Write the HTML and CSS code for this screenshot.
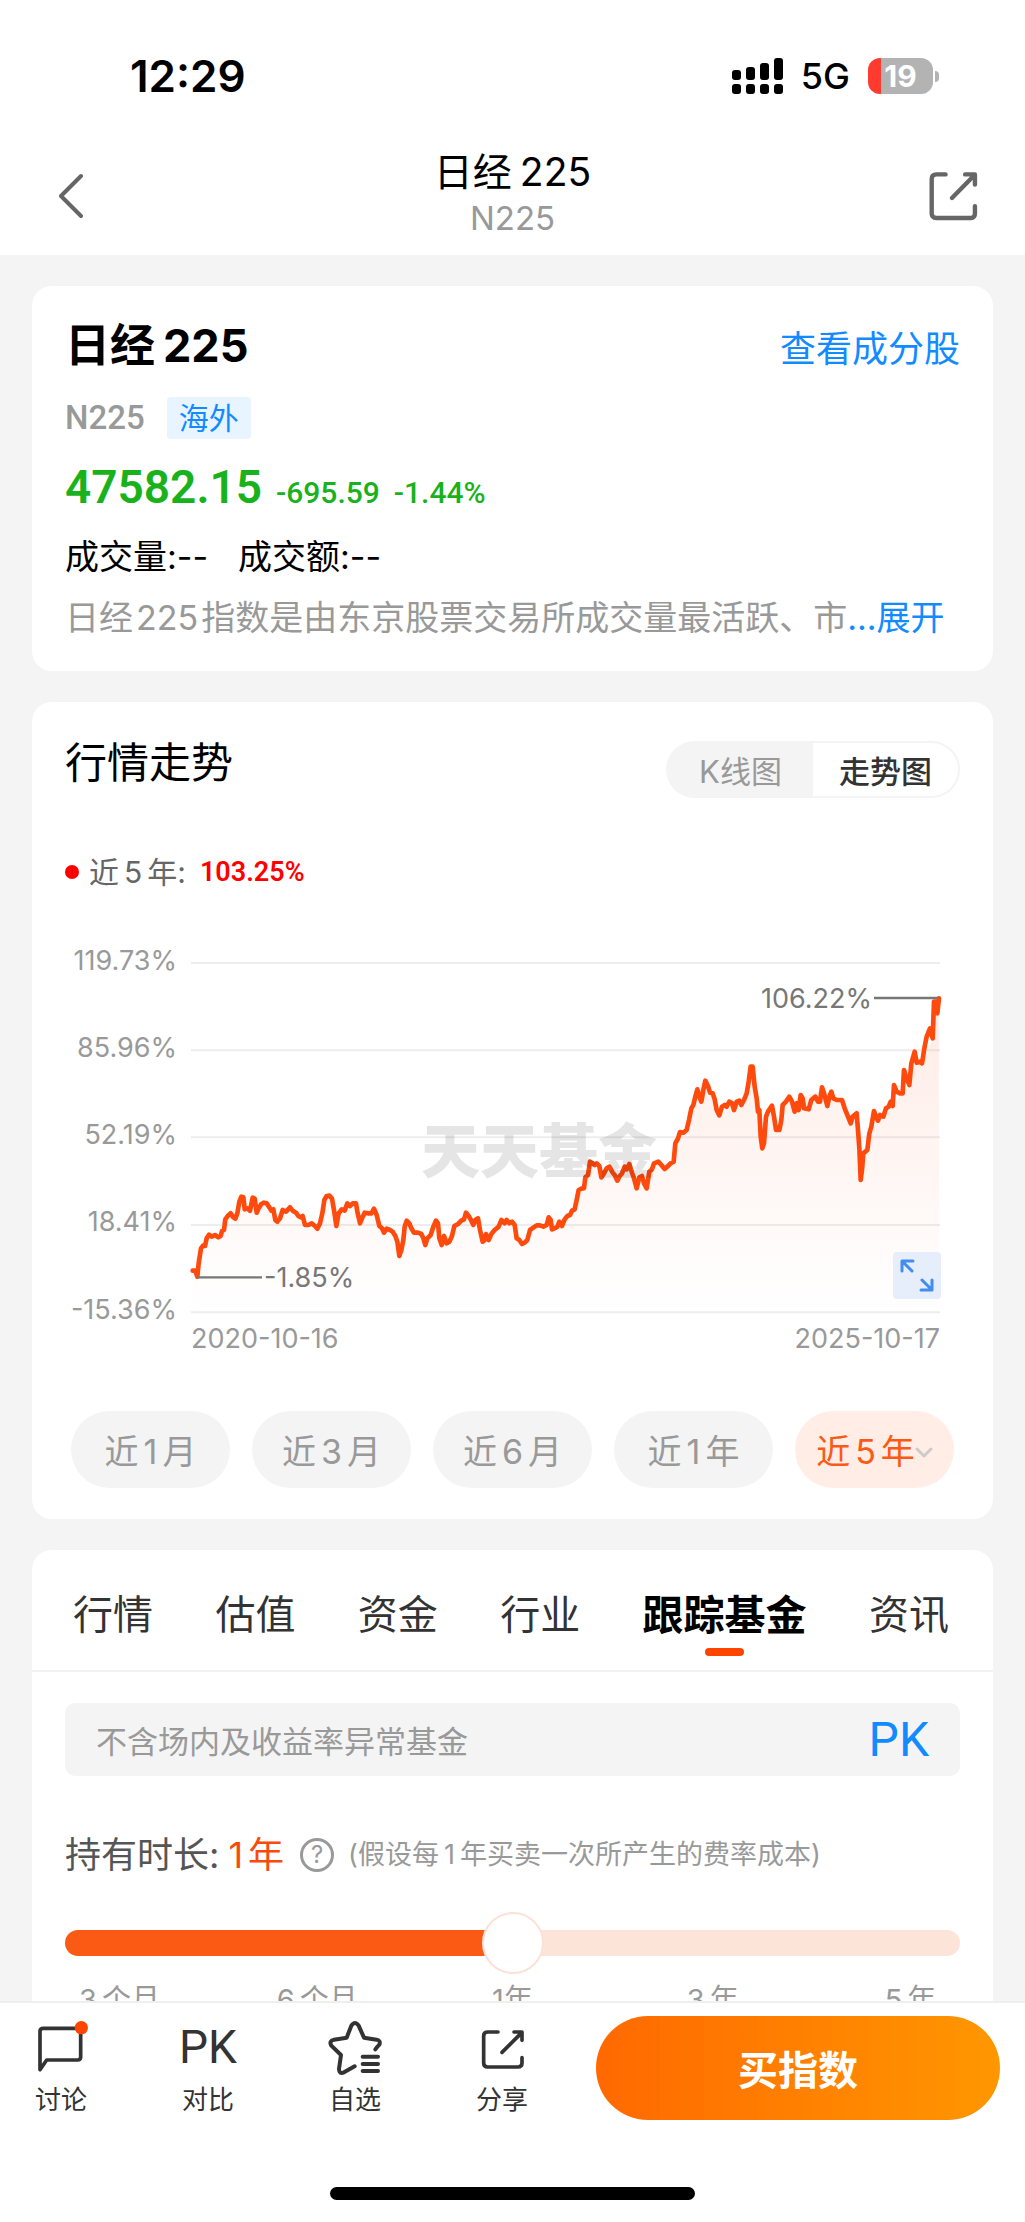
FILE: index.html
```html
<!DOCTYPE html>
<html lang="zh-CN">
<head>
<meta charset="utf-8">
<meta name="viewport" content="width=device-width, initial-scale=1">
<title>日经225</title>
<link rel="stylesheet" href="styles.css">
</head>
<body>
<div class="app">
  <header class="top">
    <div class="status">
      <span class="clock">12:29</span>
      <div class="status-icons">
        <svg class="signal" viewBox="0 0 51 36" aria-hidden="true">
          <rect x="0" y="12" width="9" height="10" rx="3"/><rect x="14" y="9" width="9" height="13" rx="3"/><rect x="28" y="5" width="9" height="17" rx="3"/><rect x="42" y="0" width="9" height="22" rx="3"/>
          <rect x="0" y="26" width="9" height="10" rx="3"/><rect x="14" y="26" width="9" height="10" rx="3"/><rect x="28" y="26" width="9" height="10" rx="3"/><rect x="42" y="26" width="9" height="10" rx="3"/>
        </svg>
        <span class="network">5G</span>
        <span class="battery"><span class="battery-level">19</span></span>
      </div>
    </div>
    <nav class="nav">
      <button class="icon-btn" aria-label="返回">
        <svg class="back-icon" viewBox="0 0 24 46" fill="none" stroke="#666" stroke-width="4" stroke-linecap="round" stroke-linejoin="round"><path d="M22 3 2 23 22 43"/></svg>
      </button>
      <div class="nav-title">
        <h1 class="nav-name">日经<span class="num">225</span></h1>
        <p class="nav-code">N225</p>
      </div>
      <button class="icon-btn" aria-label="分享">
        <svg class="share-icon" viewBox="30 38 148 148" fill="none" stroke="#666" stroke-width="13" stroke-linecap="round" stroke-linejoin="round"><path d="M79 48H52Q38 48 38 62V164Q38 177 52 177H154Q166 177 166 164V142M98 118 162 53M137 48H166V78"/></svg>
      </button>
    </nav>
  </header>

  <main class="content">
    <section class="card summary">
      <div class="summary-head">
        <h2 class="index-name">日经<span class="num">225</span></h2>
        <a class="link" href="#">查看成分股</a>
      </div>
      <div class="code-row"><span class="code">N225</span><span class="tag">海外</span></div>
      <div class="quote"><strong class="price">47582.15</strong><span class="change">-695.59</span><span class="change">-1.44%</span></div>
      <div class="volume"><span>成交量:--</span><span>成交额:--</span></div>
      <p class="intro">日经<span class="num">225</span>指数是由东京股票交易所成交量最活跃、市<a class="more" href="#">...展开</a></p>
    </section>

    <section class="card trend">
      <div class="trend-head">
        <h2 class="section-title">行情走势</h2>
        <div class="segment">
          <button class="segment-item">K线图</button>
          <button class="segment-item is-active">走势图</button>
        </div>
      </div>
      <div class="legend"><i class="dot"></i><span>近<span class="num">5</span>年:</span><strong class="legend-value">103.25%</strong></div>
      <svg class="chart" viewBox="0 0 895 450" role="img" aria-label="近5年走势">
        <defs>
          <linearGradient id="fade" x1="0" y1="0" x2="0" y2="1"><stop offset="0" stop-color="#f94e16" stop-opacity=".11"/><stop offset="1" stop-color="#f94e16" stop-opacity="0"/></linearGradient>
          <path id="curve" d="M458 1022 466 1022 472 1040 476 1000 483 955 489 947 495 948 500 925 507 914 515 920 525 915 535 922 542 918 546 903 552 900 556 868 563 858 572 850 580 862 586 866 592 850 598 815 604 800 610 802 614 838 622 835 630 842 638 803 644 806 650 848 656 835 664 822 672 818 680 820 688 832 694 842 700 838 706 870 712 875 720 865 728 840 738 845 750 832 758 842 768 848 775 858 782 862 788 858 795 885 805 885 815 880 825 888 832 896 840 880 847 850 853 810 860 798 868 797 876 806 882 840 889 888 896 850 905 838 914 842 922 820 930 828 938 820 948 820 953 850 960 880 966 865 974 848 984 850 994 850 1002 836 1010 855 1018 888 1026 895 1032 908 1040 896 1050 900 1058 905 1066 918 1072 935 1078 978 1084 960 1090 930 1094 890 1100 872 1108 880 1114 895 1122 908 1134 908 1144 912 1150 925 1156 945 1162 925 1172 915 1180 890 1188 872 1194 880 1198 925 1205 945 1212 918 1220 940 1228 935 1236 918 1243 888 1254 882 1264 872 1272 868 1278 848 1286 858 1294 872 1300 885 1306 870 1314 865 1320 900 1328 935 1334 930 1338 912 1346 930 1354 912 1364 900 1376 890 1384 870 1394 880 1400 870 1408 880 1416 875 1424 885 1430 925 1438 930 1446 942 1454 938 1462 930 1470 900 1480 893 1490 886 1500 886 1510 890 1520 885 1526 862 1532 870 1536 898 1544 895 1552 890 1558 875 1566 888 1574 868 1582 858 1590 855 1596 842 1604 838 1610 810 1616 780 1626 775 1632 775 1636 742 1644 735 1650 695 1658 700 1664 705 1670 700 1678 708 1684 742 1692 730 1700 715 1708 710 1718 728 1724 735 1732 752 1738 740 1746 730 1754 710 1760 718 1768 702 1776 728 1782 745 1790 775 1798 742 1806 738 1812 760 1820 775 1828 725 1836 718 1842 700 1855 695 1864 705 1874 717 1884 708 1892 700 1901 695 1906 640 1914 625 1920 606 1930 608 1940 600 1947 570 1954 535 1960 525 1966 500 1972 478 1978 500 1984 515 1990 480 1996 452 2004 468 2010 488 2018 490 2024 508 2030 540 2038 556 2046 530 2054 525 2060 530 2068 515 2076 520 2082 540 2090 515 2098 512 2104 525 2112 510 2120 490 2126 455 2132 410 2138 410 2144 470 2150 505 2154 545 2158 540 2162 620 2167 655 2172 640 2178 560 2184 545 2196 527 2202 560 2208 600 2218 600 2224 570 2228 525 2238 515 2248 500 2256 515 2264 545 2270 520 2276 540 2282 495 2288 505 2292 535 2306 538 2314 510 2326 500 2334 515 2340 515 2346 472 2352 490 2362 528 2368 500 2374 485 2380 505 2390 510 2406 510 2414 535 2424 560 2432 580 2438 560 2450 550 2454 600 2458 655 2460 700 2462 750 2466 720 2470 670 2476 665 2482 660 2488 610 2494 590 2502 543 2508 560 2514 572 2520 555 2530 560 2538 535 2546 530 2552 515 2558 528 2562 465 2570 485 2580 490 2588 490 2592 420 2598 440 2608 465 2614 400 2624 365 2630 398 2640 395 2646 400 2654 350 2660 320 2670 295 2678 325 2682 215 2688 215 2692 250 2697 205"/>
        </defs>
        <g class="axis-text" text-anchor="end">
          <text x="112" y="40">119.73%</text><text x="112" y="127">85.96%</text><text x="112" y="214">52.19%</text><text x="112" y="301">18.41%</text><text x="112" y="389">-15.36%</text>
        </g>
        <svg width="895" height="430" viewBox="75 0 2685 1290">
          <path d="M453 99H2700M453 361H2700M453 622H2700M453 885H2700M453 1147H2700" stroke="#ededed" stroke-width="6"/>
          <clipPath id="under"><path d="M458 1022 472 1040 483 955 507 914 542 918 556 868 592 850 604 800 638 803 672 818 706 870 750 832 795 885 832 896 853 810 868 797 889 888 922 820 948 820 960 880 1002 836 1026 895 1066 918 1078 978 1100 872 1156 945 1188 872 1205 945 1278 848 1328 935 1384 870 1424 885 1446 942 1490 886 1566 888 1604 838 1626 775 1650 695 1678 708 1732 752 1768 702 1790 775 1820 775 1842 700 1901 695 1920 606 1940 600 1972 490 1996 452 2038 556 2112 510 2135 410 2154 545 2167 655 2196 527 2214 600 2228 525 2346 480 2406 510 2432 580 2450 550 2462 750 2502 543 2530 560 2588 490 2608 465 2624 375 2646 400 2678 325 2682 215 2697 205V1147H458Z"/></clipPath>
          <rect x="453" y="205" width="2247" height="942" fill="url(#fade)" clip-path="url(#under)"/>
          <use href="#curve" fill="none" stroke="#ff4a0d" stroke-width="14" stroke-linejoin="round" stroke-linecap="round"/>
          <path d="M472 1042H666M2502 204H2695" stroke="#777" stroke-width="7"/>
        </svg>
        <text class="watermark" x="474" y="243" text-anchor="middle">天天基金</text>
        <text class="mark-text" x="199" y="357">-1.85%</text>
        <text class="mark-text" x="807" y="78" text-anchor="end">106.22%</text>
        <text class="axis-text" x="126" y="418">2020-10-16</text>
        <text class="axis-text" x="875" y="418" text-anchor="end">2025-10-17</text>
        <g fill="none" stroke="#438df0" stroke-width="3" stroke-linecap="round" stroke-linejoin="round">
          <rect x="828" y="322" width="48" height="47" rx="4" fill="#e6edfb" stroke="none"/>
          <path d="M837 341V331H848M838 332 847 341M867 350V360H856M866 359 857 350"/>
        </g>
      </svg>
      <div class="periods">
        <button class="period">近<span class="num">1</span>月</button>
        <button class="period">近<span class="num">3</span>月</button>
        <button class="period">近<span class="num">6</span>月</button>
        <button class="period">近<span class="num">1</span>年</button>
        <button class="period is-active">近<span class="num">5</span>年<svg class="caret" viewBox="0 0 18 12" fill="none" stroke="#ccc" stroke-width="3" stroke-linecap="round" aria-hidden="true"><path d="M2 2 9 9 16 2"/></svg></button>
      </div>
    </section>

    <section class="card funds">
      <div class="tabs">
        <button class="tab">行情</button>
        <button class="tab">估值</button>
        <button class="tab">资金</button>
        <button class="tab">行业</button>
        <button class="tab is-active">跟踪基金</button>
        <button class="tab">资讯</button>
      </div>
      <div class="funds-body">
        <div class="notice"><span>不含场内及收益率异常基金</span><button class="notice-pk">PK</button></div>
        <div class="hold">
          <label class="hold-label" for="hold">持有时长:<span class="hold-value"><span class="num">1</span>年</span></label>
          <button class="help" aria-label="说明">?</button>
          <span class="hold-note">(假设每<span class="num">1</span>年买卖一次所产生的费率成本)</span>
        </div>
        <input class="slider" id="hold" type="range" min="0" max="4" step="1" value="2">
        <div class="ticks"><span><span class="num">3</span>个月</span><span><span class="num">6</span>个月</span><span>1年</span><span><span class="num">3</span>年</span><span><span class="num">5</span>年</span></div>
      </div>
    </section>
  </main>

  <footer class="bottom">
    <div class="actions">
      <div class="action-list">
        <button class="action">
          <svg class="action-icon" viewBox="93 99 180 180" fill="none" stroke="#333" stroke-width="11" stroke-linejoin="round"><path d="M120 260V145Q120 136 130 136H233Q242 136 242 146V222Q242 231 233 231H140Z"/><circle cx="244" cy="134" r="20" fill="#ff4400" stroke="none"/></svg>
          <span>讨论</span>
        </button>
        <button class="action"><span class="action-icon action-pk">PK</span><span>对比</span></button>
        <button class="action">
          <svg class="action-icon" viewBox="975 99 180 180" fill="none" stroke="#333" stroke-width="12" stroke-linejoin="round" stroke-linecap="round"><path d="M1126 199Q1132 191 1138 185Q1143 173 1130 170L1092 164L1076 128Q1065 112 1054 128L1040 164L1002 170Q986 174 994 188L1023 216L1017 258Q1017 274 1032 268L1064 250M1088 221H1134M1088 243H1134M1088 264H1134"/></svg>
          <span>自选</span>
        </button>
        <button class="action">
          <svg class="action-icon" viewBox="1416 99 180 180" fill="none" stroke="#333" stroke-width="11" stroke-linejoin="round" stroke-linecap="round"><path d="M1494 147H1463Q1451 147 1451 159V240Q1451 252 1463 252H1554Q1566 252 1566 240V224M1506 208 1563 151M1542 147H1566V172"/></svg>
          <span>分享</span>
        </button>
      </div>
      <button class="buy">买指数</button>
    </div>
    <div class="home-bar"></div>
  </footer>
</div>
</body>
</html>
```
FILE: styles.css
```css
* { box-sizing: border-box; }
body {
  margin: 0;
  background: #f4f4f4;
  color: #000;
  font-family: Inter, "Noto Sans CJK SC", sans-serif;
}
h1, h2, p { margin: 0; font-weight: 400; }
button { margin: 0; padding: 0; border: 0; background: none; color: inherit; font: inherit; cursor: pointer; }
a { color: #128bff; text-decoration: none; }
.num { margin: 0 5px; }

.app { display: flex; flex-direction: column; height: 100vh; }
.top { flex: none; background: #fff; }
.status {
  display: flex; justify-content: space-between; align-items: center;
  height: 140px; padding: 12px 92px 0 130px;
}
.clock { font-size: 44px; font-weight: 600; line-height: 50px; }
.status-icons { display: flex; align-items: center; gap: 18px; }
.signal { width: 51px; height: 36px; }
.network { font-size: 36px; font-weight: 500; line-height: 40px; }
.battery {
  position: relative;
  width: 65px; height: 36px; border-radius: 12px;
  background: linear-gradient(90deg, #ff3b30 13px, #b3b3b3 13px);
  text-align: center;
}
.battery::after {
  content: ""; position: absolute; left: 67px; top: 13px;
  width: 4px; height: 11px; border-radius: 0 4px 4px 0; background: #b3b3b3;
}
.battery-level { display: block; color: #fff; font-size: 30px; font-weight: 700; line-height: 36px; }

.nav { display: flex; justify-content: space-between; align-items: center; padding: 10px 39px 13px; }
.icon-btn { display: flex; justify-content: center; width: 64px; }
.back-icon { width: 24px; height: 46px; }
.share-icon { width: 50px; height: 50px; }
.nav-title { text-align: center; }
.nav-name { font-size: 39px; line-height: 44px; }
.nav-name .num, .index-name .num { margin-right: 0; margin-left: 8px; }
.nav-code { color: #999; font-size: 33px; line-height: 48px; }

.content {
  flex: 1; min-height: 0; overflow-y: auto; scrollbar-width: none;
  display: flex; flex-direction: column; gap: 31px; padding: 31px 32px;
}
.card { flex: none; border-radius: 20px; background: #fff; }
.summary { padding: 30px 33px 31px; }
.summary-head { display: flex; justify-content: space-between; align-items: center; }
.index-name { font-size: 45px; font-weight: 700; line-height: 60px; }
.link { padding-top: 6px; font-size: 36px; line-height: 44px; }
.code-row { display: flex; align-items: center; gap: 22px; margin-top: 21px; }
.code { color: #999; font: 500 33px/42px Roboto, sans-serif; }
.tag { padding: 0 12px; border-radius: 4px; background: #e8f4ff; color: #128bff; font-size: 30px; line-height: 42px; }
.quote { display: flex; align-items: baseline; gap: 14px; height: 60px; margin-top: 18px; color: #19b21c; font-family: Roboto, sans-serif; font-weight: 500; line-height: 60px; }
.price { font-size: 46px; font-weight: 600; }
.change { font-size: 30px; }
.volume { display: flex; gap: 30px; margin-top: 18px; font-size: 34px; line-height: 44px; }
.intro { height: 44px; margin-top: 17px; color: #999; font-size: 34px; line-height: 44px; white-space: nowrap; }
.intro .num { margin: 0 3px; }

.trend { padding: 39px 33px 31px; }
.trend-head { display: flex; justify-content: space-between; align-items: flex-start; }
.section-title { font-size: 42px; line-height: 44px; }
.segment { display: flex; width: 294px; height: 57px; padding: 2px; border-radius: 29px; background: #f4f4f4; }
.segment-item { flex: 1; color: #999; font-size: 31px; }
.segment-item.is-active { border-radius: 0 27px 27px 0; background: #fff; color: #333; font-weight: 500; }
.legend { display: flex; align-items: center; margin-top: 54px; color: #666; font-size: 30px; line-height: 40px; }
.dot { width: 14px; height: 14px; margin-right: 10px; border-radius: 50%; background: #f00; }
.legend-value { margin-left: 14px; color: #f00; font-family: Roboto, sans-serif; font-size: 27px; font-weight: 600; }
.chart { display: block; width: 100%; margin-top: 38px; }
.axis-text { fill: #999; font-size: 27px; }
.mark-text { fill: #777; font-size: 27px; }
.watermark { fill: #000; fill-opacity: .1; font-size: 59px; font-weight: 900; }
.periods { display: flex; gap: 22px; margin-top: 31px; padding: 0 6px; }
.period { flex: 1; height: 77px; border-radius: 39px; background: #f4f4f4; color: #999; font-size: 34px; }
.period.is-active { background: #ffede6; color: #fa5a14; }
.caret { width: 18px; height: 12px; margin-bottom: 5px; }

.tabs { display: flex; justify-content: space-between; padding: 40px 44px 0 41px; border-bottom: 2px solid #f2f2f2; }
.tab { display: flex; flex-direction: column; align-items: center; height: 80px; color: #333; font-size: 40px; line-height: 50px; }
.tab.is-active { color: #000; font-size: 41px; font-weight: 700; }
.tab.is-active::after { content: ""; width: 39px; height: 8px; margin-top: 8px; border-radius: 4px; background: #ff4400; }
.funds-body { padding: 31px 33px; }
.notice {
  display: flex; justify-content: space-between; align-items: center;
  height: 73px; padding: 0 31px; border-radius: 10px; background: #f4f4f4; color: #999; font-size: 31px;
}
.notice-pk { color: #128bff; font: 400 48px/60px Roboto, sans-serif; }
.hold { display: flex; align-items: center; margin-top: 54px; line-height: 50px; }
.hold-label { color: #555; font-size: 36px; }
.hold-value { margin-left: 4px; color: #fa4a0a; }
.help { width: 34px; height: 34px; margin: 0 14px 0 16px; border: 3px solid #999; border-radius: 50%; color: #999; font-size: 24px; line-height: 28px; }
.hold-note { color: #999; font-size: 27px; }
.slider {
  appearance: none; display: block; width: 100%; height: 62px; margin: 32px 0 0; background: none;
}
.slider::-webkit-slider-runnable-track {
  height: 26px; border-radius: 13px; background: linear-gradient(90deg, #fb5a14 50%, #fde4d9 50%);
}
.slider::-webkit-slider-thumb {
  appearance: none; width: 62px; height: 62px; margin-top: -18px;
  border: 2px solid #fde1d7; border-radius: 50%; background: #fff;
}
.ticks { display: flex; justify-content: space-between; margin-top: 6px; color: #999; font-size: 29px; line-height: 40px; }
.ticks > span { width: 104px; text-align: center; }

.bottom { flex: none; display: flex; flex-direction: column; height: 221px; border-top: 2px solid #efefef; background: #fff; }
.actions { display: flex; justify-content: space-between; padding: 13px 25px 0 0; }
.action-list { display: flex; flex: 1; gap: 25px; }
.action { display: flex; flex-direction: column; align-items: center; width: 122px; color: #333; font-size: 26px; line-height: 38px; }
.action-icon { width: 60px; height: 60px; margin-bottom: 5px; }
.action-pk { font: 400 46px/62px Roboto, sans-serif; }
.buy {
  width: 404px; height: 104px; border-radius: 52px;
  background: linear-gradient(90deg, #ff6900, #ff9700); color: #fff; font-size: 40px; font-weight: 700;
}
.home-bar { width: 365px; height: 13px; margin: auto auto 22px; border-radius: 7px; background: #000; }
```
